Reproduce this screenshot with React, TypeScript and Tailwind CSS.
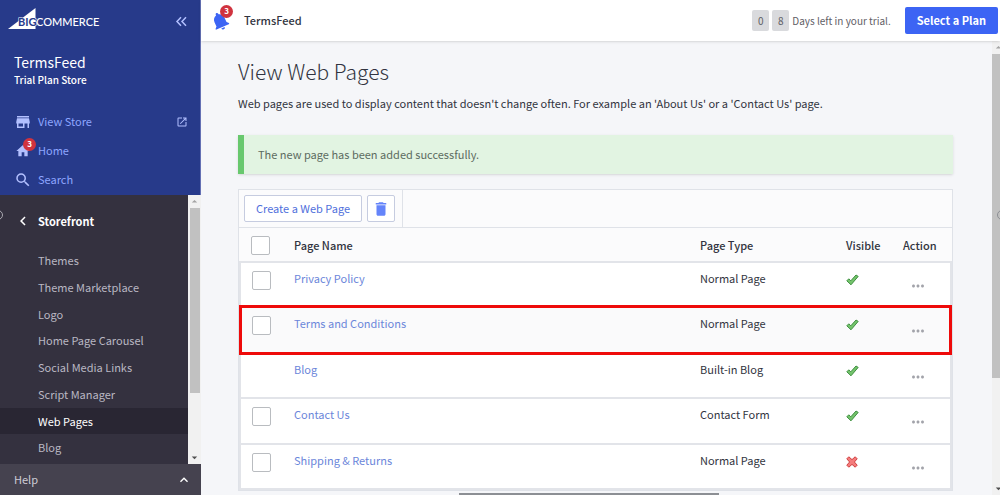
import React from 'react';
import {
    MdArrowDropDown,
    MdArrowDropUp,
    MdChevronLeft,
    MdDelete,
    MdExpandLess,
    MdHome,
    MdMoreHoriz,
    MdNotifications,
    MdOpenInNew,
    MdSearch,
    MdStore,
} from "react-icons/md";

const storefrontLinks = [
    "Themes",
    "Theme Marketplace",
    "Logo",
    "Home Page Carousel",
    "Social Media Links",
    "Script Manager",
    "Web Pages",
    "Blog",
];

const pages = [
    { name: "Privacy Policy", type: "Normal Page", visible: true },
    { name: "Terms and Conditions", type: "Normal Page", visible: true, highlighted: true },
    { name: "Blog", type: "Built-in Blog", visible: true, builtIn: true },
    { name: "Contact Us", type: "Contact Form", visible: true },
    { name: "Shipping & Returns", type: "Normal Page", visible: false },
];

function Logo() {
    return (
        <svg width="92" height="22" viewBox="0 0 92 22" role="img" aria-label="BigCommerce">
            <path d="M0 21 L27.5 0 V21 Z" fill="#fff" />
            <g fontFamily="Lato, sans-serif" fontSize="11" fontWeight="500">
                <text x="10" y="18" fill="#273a8a" stroke="#fff" strokeWidth="1" paintOrder="stroke" fontWeight="700">BIG</text>
                <text x="28" y="18" fill="#fff">COMMERCE</text>
            </g>
        </svg>
    );
}

function Tick() {
    return (
        <svg width="13" height="12" viewBox="0 0 13 12" aria-label="Visible" role="img">
            <path d="M0.8 6.8 L2.8 4.8 L4.8 6.8 L10 1 L12.2 2.4 L5 10.8 Z" fill="#74c46c" stroke="#3f8f40" strokeWidth="1" strokeLinejoin="round" />
        </svg>
    );
}

function Cross() {
    return (
        <svg width="12" height="12" viewBox="0 0 12 12" aria-label="Hidden" role="img">
            <path d="M2.8 0.8 L6 3.6 L9.2 0.8 L11.2 2.8 L8.4 6 L11.2 9.2 L9.2 11.2 L6 8.4 L2.8 11.2 L0.8 9.2 L3.6 6 L0.8 2.8 Z" fill="#f47c7c" stroke="#d04040" strokeWidth="1" strokeLinejoin="round" />
        </svg>
    );
}

function Checkbox({ label }: { label: string }) {
    return (
        <input
            type="checkbox"
            aria-label={label}
            className="block h-[19px] w-[19px] appearance-none rounded-xs border border-[#b9bcc0] bg-white"
        />
    );
}

function Sidebar() {
    return (
        <aside className="flex w-[201px] shrink-0 flex-col">
            <div className="flex h-[195px] shrink-0 flex-col border-r border-[#6470b4] bg-[#273a8a]">
                <div className="flex items-start justify-between pt-2 pr-3 pl-2">
                    <Logo />
                    <button type="button" aria-label="Collapse menu" className="pt-2 text-[#b3c0ff]">
                        <svg width="13" height="11" viewBox="0 0 13 11" fill="none" stroke="currentColor" strokeWidth="1.5">
                            <path d="M6 1.2 L2 5.5 L6 9.8 M11 1.2 L7 5.5 L11 9.8" />
                        </svg>
                    </button>
                </div>
                <div className="px-[14px] pt-[22px] text-white">
                    <div className="text-[14px] leading-5">TermsFeed</div>
                    <div className="text-[10px] leading-4 font-medium">Trial Plan Store</div>
                </div>
                <nav className="flex flex-col pt-[19px] pr-3 pl-[14px] text-[11px] leading-[29px] text-[#8ea6ff]">
                    <a href="#" className="flex items-center gap-[6px]">
                        <MdStore className="h-[18px] w-[18px] text-[#b3c0ff]" />
                        <span className="flex-1">View Store</span>
                        <MdOpenInNew className="h-3 w-3 text-[#b3c0ff]" />
                    </a>
                    <a href="#" className="flex items-center gap-[6px]">
                        <span className="relative">
                            <MdHome className="mx-px h-4 w-4 text-[#b3c0ff]" />
                            <span className="absolute -top-[5px] -right-1 flex h-[13px] w-[13px] items-center justify-center rounded-full bg-[#d0333f] text-[8px] leading-none font-bold text-white">
                                3
                            </span>
                        </span>
                        <span>Home</span>
                    </a>
                    <a href="#" className="flex items-center gap-[6px]">
                        <MdSearch className="h-[18px] w-[18px] text-[#b3c0ff]" />
                        <span>Search</span>
                    </a>
                </nav>
            </div>
            <div className="flex min-h-0 flex-1 bg-[#34313f]">
                <nav className="min-w-0 flex-1 overflow-hidden text-[11px] text-[#bab8c3]">
                    <a href="#" className="my-3 flex items-center gap-[6px] pl-[14px] leading-7 font-bold text-white">
                        <MdChevronLeft className="h-[18px] w-[18px]" />
                        Storefront
                    </a>
                    <div className="flex h-[214px] flex-col">
                        {storefrontLinks.map((link) => (
                            <a
                                key={link}
                                href="#"
                                className={link === "Web Pages" ? "flex flex-1 items-center bg-[#292633] pl-[38px] text-white" : "flex flex-1 items-center pl-[38px]"}
                            >
                                {link}
                            </a>
                        ))}
                    </div>
                </nav>
                <div className="flex w-[13px] flex-col items-center bg-[#f1f1f1]">
                    <MdArrowDropUp className="h-[13px] w-[13px] text-[#a3a3a3]" />
                    <div className="h-[185px] w-[10px] bg-[#c1c1c1]" />
                    <MdArrowDropDown className="mt-auto h-[13px] w-[13px] text-[#505050]" />
                </div>
            </div>
            <button type="button" className="flex h-[31px] shrink-0 items-center justify-between bg-[#45424f] pr-[9px] pl-[14px] text-[11px] text-[#cfcdd6]">
                Help
                <MdExpandLess className="h-4 w-4 text-white" />
            </button>
        </aside>
    );
}

function Header() {
    return (
        <header className="z-10 flex h-[41px] shrink-0 items-center bg-white pr-[2px] pl-2 shadow-sm">
            <button type="button" aria-label="Notifications" className="relative">
                <MdNotifications className="h-[22px] w-[22px] -rotate-[24deg] text-[#3c64f4]" />
                <span className="absolute -top-[5px] -right-[2px] flex h-[13px] w-[13px] items-center justify-center rounded-full bg-[#d0333f] text-[8px] leading-none font-bold text-white">
                    3
                </span>
            </button>
            <span className="pl-[13px] text-[11px] font-medium text-[#313440]">TermsFeed</span>
            <div className="ml-auto flex items-center text-[10px] text-[#5f6066]">
                <span className="mr-[3px] flex h-[21px] w-[17px] items-center justify-center rounded-xs bg-[#d9dadd]">0</span>
                <span className="mr-[3px] flex h-[21px] w-[17px] items-center justify-center rounded-xs bg-[#d9dadd]">8</span>
                <span>Days left in your trial.</span>
                <button type="button" className="ml-[14px] h-[27px] rounded-xs bg-[#3c64f4] px-3 text-[11px] font-bold text-white">
                    Select a Plan
                </button>
            </div>
        </header>
    );
}

function PagesTable() {
    return (
        <div className="mt-[15px] border border-[#dfe2e8] bg-[#fbfbfc] text-[11px] text-[#313440]">
            <div className="flex h-[38px] border-b border-[#dfe2e8]">
                <div className="flex items-center gap-[5px] border-r border-[#dfe2e8] pr-[7px] pl-[5px]">
                    <button type="button" className="h-[27px] rounded-xs border border-[#c6cce0] bg-white px-[11px] text-[#5070dc]">
                        Create a Web Page
                    </button>
                    <button type="button" aria-label="Delete" className="flex h-[27px] w-7 items-center justify-center rounded-xs border border-[#c6cce0] bg-white text-[#6484fa]">
                        <MdDelete className="h-[18px] w-[18px]" />
                    </button>
                </div>
            </div>
            <table className="h-[262px] w-full table-fixed border-collapse text-left">
                <colgroup>
                    <col className="w-[54px]" />
                    <col />
                    <col className="w-[146px]" />
                    <col className="w-[57px]" />
                    <col className="w-[48px]" />
                </colgroup>
                <thead>
                    <tr className="h-[34px]">
                        <th className="pt-px pl-[11px]"><Checkbox label="Select all pages" /></th>
                        <th className="pt-px font-medium">Page Name</th>
                        <th className="pt-px font-medium">Page Type</th>
                        <th className="pt-px font-medium">Visible</th>
                        <th className="pt-px font-medium">Action</th>
                    </tr>
                </thead>
                <tbody>
                    {pages.map((page) => (
                        <tr
                            key={page.name}
                            className={page.highlighted ? "relative border-2 border-[#e2e4e9] bg-[#fafafb] align-top" : "border-2 border-[#e2e4e9] bg-white align-top"}
                        >
                            <td className="pt-2 pl-[11px]">{!page.builtIn && <Checkbox label={page.name} />}</td>
                            <td className="pt-[5px] leading-5"><a href="#" className="text-[#6b86da]">{page.name}</a></td>
                            <td className="pt-[5px] leading-5">{page.type}</td>
                            <td className="pt-[11px]">{page.visible ? <Tick /> : <Cross />}</td>
                            <td className="pt-[14px] pl-[6px]">
                                <button type="button" aria-label="Actions" className="block text-[#a2a3aa]">
                                    <MdMoreHoriz className="h-[18px] w-[18px]" />
                                </button>
                                {page.highlighted && <div className="pointer-events-none absolute -inset-x-[3px] -top-1 -bottom-1 border-3 border-[#ee0a0a]" />}
                            </td>
                        </tr>
                    ))}
                </tbody>
            </table>
        </div>
    );
}

export default function App() {
    return (
        <div className="relative flex h-screen overflow-hidden bg-[#f5f6f9] font-['Noto_Sans_CJK_SC','Noto_Sans',sans-serif]">
            <Sidebar />
            <div className="flex min-w-0 flex-1 flex-col">
                <Header />
                <div className="flex min-h-0 flex-1">
                    <main className="min-w-0 flex-1 overflow-hidden pt-[14px] pr-[39px] pl-[37px] text-[11px] text-[#313440]">
                        <h1 className="text-[21px] leading-8 font-extralight">View Web Pages</h1>
                        <p className="mt-[6px] leading-5">
                            Web pages are used to display content that doesn't change often. For example an 'About Us' or a 'Contact Us' page.
                        </p>
                        <div role="status" className="mt-[22px] h-[39px] border-l-[6px] border-[#68c86e] bg-[#e2f4e2] pl-[14px] leading-[39px] text-[#5c6b60] shadow-sm">
                            The new page has been added successfully.
                        </div>
                        <PagesTable />
                    </main>
                    <div className="flex w-2 shrink-0 flex-col overflow-hidden bg-[#f1f1f1]">
                        <MdArrowDropUp className="h-[13px] w-[13px] shrink-0 text-[#a3a3a3]" />
                        <div className="h-[324px] bg-[#c1c1c1]" />
                        <MdArrowDropDown className="mt-auto h-[13px] w-[13px] shrink-0 text-[#505050]" />
                    </div>
                </div>
            </div>
            {/* window resize handles */}
            <div className="absolute bottom-0 left-[459px] h-[2px] w-[260px] bg-[#8c8f94]" />
            <div className="absolute top-[210px] -left-[7px] h-[10px] w-[10px] rounded-full border border-[#a9a8b0]" />
            <div className="absolute top-[210px] -right-[7px] h-[10px] w-[10px] rounded-full border border-[#8c8f94]" />
        </div>
    );
}
